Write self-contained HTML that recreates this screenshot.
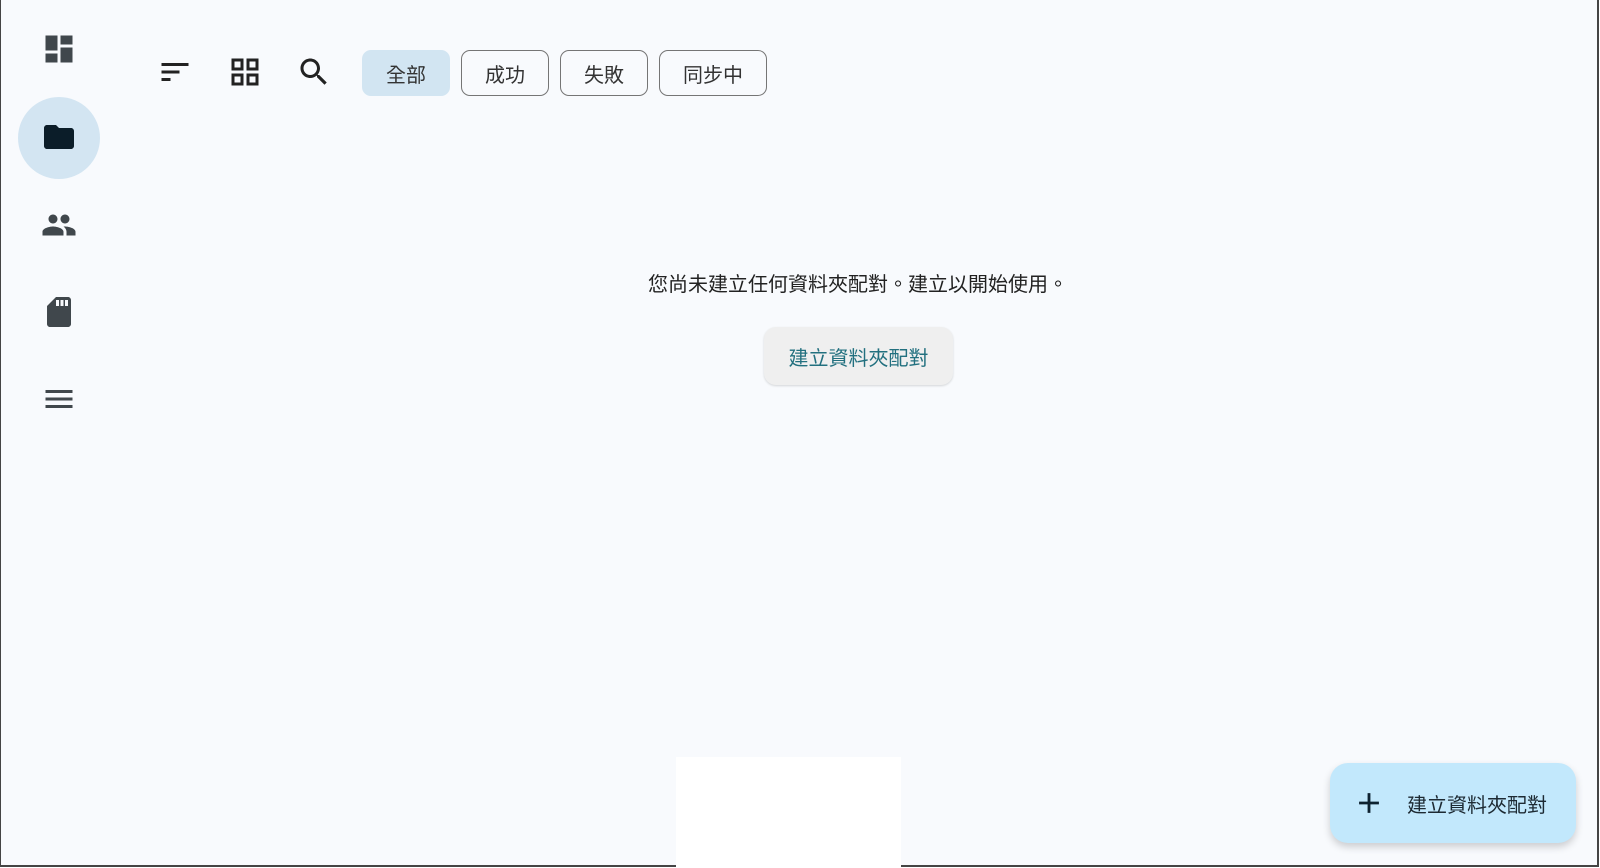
<!DOCTYPE html>
<html><head><meta charset="utf-8"><style>
*{margin:0;padding:0;box-sizing:border-box}
body{width:1600px;height:868px;background:#fff;font-family:"Liberation Sans","Noto Sans CJK TC",sans-serif;position:relative;overflow:hidden}
#frame{position:absolute;left:0;top:0;width:1599px;height:867px;background:#f8fafd;border-left:1px solid #444;border-bottom:2px solid #444;border-right:2px solid #444}
#in{position:absolute;left:-1px;top:0;width:1600px;height:868px}
.ic{position:absolute;width:36px;height:36px}
.chip{position:absolute;top:50px;height:46px;border:1.5px solid #757575;border-radius:9px;font-size:20px;color:#333;display:flex;align-items:center;justify-content:center}
</style></head><body>
<div id="frame"><div id="in">
<div style="position:absolute;left:18px;top:97px;width:82px;height:82px;border-radius:50%;background:#d3e5f2"></div>
<svg class="ic" style="left:41px;top:31px" viewBox="0 0 24 24"><path fill="#40474c" d="M3 13h8V3H3v10zm0 8h8v-6H3v6zm10 0h8V11h-8v10zm0-18v6h8V3h-8z"/></svg>
<svg class="ic" style="left:41px;top:119px" viewBox="0 0 24 24"><path fill="#0b1d29" d="M10 4H4c-1.1 0-2 .9-2 2v12c0 1.1.9 2 2 2h16c1.1 0 2-.9 2-2V8c0-1.1-.9-2-2-2h-8l-2-2z"/></svg>
<svg class="ic" style="left:41px;top:207px" viewBox="0 0 24 24"><path fill="#40474c" d="M16 11c1.66 0 2.99-1.34 2.99-3S17.66 5 16 5c-1.66 0-3 1.34-3 3s1.34 3 3 3zm-8 0c1.66 0 2.99-1.34 2.99-3S9.66 5 8 5C6.34 5 5 6.34 5 8s1.34 3 3 3zm0 2c-2.33 0-7 1.17-7 3.5V19h14v-2.5c0-2.33-4.67-3.5-7-3.5zm8 0c-.29 0-.62.02-.97.05 1.16.84 1.97 1.97 1.97 3.45V19h6v-2.5c0-2.33-4.67-3.5-7-3.5z"/></svg>
<svg class="ic" style="left:41px;top:294px" viewBox="0 0 24 24"><path fill="#40474c" d="M18 2h-8L4.02 8 4 20c0 1.1.9 2 2 2h12c1.1 0 2-.9 2-2V4c0-1.1-.9-2-2-2zm-6 6h-2V4h2v4zm3 0h-2V4h2v4zm3 0h-2V4h2v4z"/></svg>
<svg class="ic" style="left:41px;top:381px" viewBox="0 0 24 24"><path fill="#40474c" d="M3 18h18v-2H3v2zm0-5h18v-2H3v2zm0-7v2h18V6H3z"/></svg>
<svg class="ic" style="left:157px;top:54px" viewBox="0 0 24 24"><path fill="#222" d="M3 18h6v-2H3v2zM3 6v2h18V6H3zm0 7h12v-2H3v2z"/></svg>
<svg class="ic" style="left:227px;top:54px" viewBox="0 0 24 24"><path fill="#222" d="M3 3v8h8V3H3zm6 6H5V5h4v4zm-6 4v8h8v-8H3zm6 6H5v-4h4v4zm4-16v8h8V3h-8zm6 6h-4V5h4v4zm-6 4v8h8v-8h-8zm6 6h-4v-4h4v4z"/></svg>
<svg class="ic" style="left:296px;top:54px" viewBox="0 0 24 24"><path fill="#222" d="M15.5 14h-.79l-.28-.27C15.41 12.59 16 11.11 16 9.5 16 5.91 13.09 3 9.5 3S3 5.91 3 9.5 5.91 16 9.5 16c1.61 0 3.09-.59 4.23-1.57l.27.28v.79l5 4.99L20.49 19l-4.99-5zm-6 0C7.01 14 5 11.99 5 9.5S7.01 5 9.5 5 14 7.01 14 9.5 11.99 14 9.5 14z"/></svg>
<div class="chip" style="left:362px;width:88px;background:#d2e5f2;border-color:#d2e5f2">全部</div>
<div class="chip" style="left:461px;width:88px">成功</div>
<div class="chip" style="left:560px;width:88px">失敗</div>
<div class="chip" style="left:659px;width:108px">同步中</div>
<div style="position:absolute;left:0;width:1716px;top:268px;text-align:center;font-size:20px;color:#222">您尚未建立任何資料夾配對。建立以開始使用。</div>
<div style="position:absolute;left:764px;top:327px;width:189px;height:58px;background:#efefef;border-radius:12px;box-shadow:0 1px 2px rgba(0,0,0,.15);color:#22707f;font-size:20px;display:flex;align-items:center;justify-content:center">建立資料夾配對</div>
<div style="position:absolute;left:676px;top:757px;width:225px;height:110px;background:#fff"></div>
<div style="position:absolute;left:1330px;top:763px;width:246px;height:80px;background:#c2e8fc;border-radius:18px;box-shadow:0 4px 8px rgba(0,0,0,.18);font-size:20px;color:#1d2a33">
<svg style="position:absolute;left:22px;top:23px" width="34" height="34" viewBox="0 0 24 24"><path fill="#0e2230" d="M19 13h-6v6h-2v-6H5v-2h6V5h2v6h6v2z"/></svg>
<span style="position:absolute;left:77px;top:26px">建立資料夾配對</span></div>
</div></div>
</body></html>
